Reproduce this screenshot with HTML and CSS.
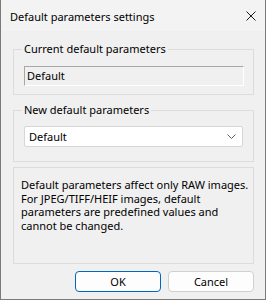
FILE: index.html
```html
<!DOCTYPE html>
<html lang="en">
<head>
  <meta charset="UTF-8">
  <title>Default parameters settings</title>
  <link rel="stylesheet" href="styles.css">
</head>
<body>
<div class="window">
  <div class="titlebar">
    <span class="title">Default parameters settings</span>
    <svg class="close" width="10" height="10" viewBox="0 0 10 10">
      <path d="M0.5 0.5 L9.5 9.5 M9.5 0.5 L0.5 9.5" stroke="#1a1a1a" stroke-width="1" fill="none"/>
    </svg>
  </div>
  <div class="content">
    <fieldset class="group group-current">
      <legend>Current default parameters</legend>
      <div class="readonly">Default</div>
    </fieldset>
    <fieldset class="group group-new">
      <legend>New default parameters</legend>
      <div class="combo">
        <span>Default</span>
        <svg class="chevron" width="9" height="5" viewBox="0 0 9 5">
          <path d="M0.5 0.5 L4.5 4.5 L8.5 0.5" stroke="#5c5c5c" stroke-width="1" fill="none"/>
        </svg>
      </div>
    </fieldset>
    <div class="info">
      Default parameters affect only RAW images.<br>
      For JPEG/TIFF/HEIF images, default<br>
      parameters are predefined values and<br>
      cannot be changed.
    </div>
    <div class="buttons">
      <button class="btn btn-default">OK</button>
      <button class="btn">Cancel</button>
    </div>
  </div>
</div>
</body>
</html>
```

FILE: styles.css
```css
* { box-sizing: border-box; }
body {
  margin: 0;
  font-family: "Noto Sans", sans-serif;
  font-size: 11px;
  color: #000;
  background: #f0f0f0;
}
.window {
  width: 266px;
  height: 300px;
  border: 1px solid #7a7a7a;
  border-top: none;
  background: #f0f0f0;
  display: flex;
  flex-direction: column;
}
.titlebar {
  height: 31px;
  background: #f3f3f3;
  display: flex;
  align-items: center;
  justify-content: space-between;
  padding: 1px 9px 0 9px;
}
.title {
  font-size: 11px;
}
.content {
  flex: 1;
  display: flex;
  flex-direction: column;
  padding: 10px 11px 7px 12px;
}
.group {
  margin: 0;
  border: 1px solid #dcdcdc;
  padding: 9px 9px 8px 10px;
}
.group legend {
  padding: 0 2px;
  margin-left: -2px;
  line-height: 16px;
  white-space: nowrap;
}
.group-new {
  margin-top: 7px;
  padding-bottom: 14px;
}
.readonly {
  height: 20px;
  line-height: 18px;
  padding-left: 2px;
  border: 1px solid;
  border-color: #a8a8a8 #ffffff #ffffff #a8a8a8;
  background: #f0f0f0;
}
.combo {
  height: 21px;
  margin-top: -1px;
  margin-right: 1px;
  background: #fff;
  border: 1px solid #d6d6d6;
  border-radius: 2px;
  display: flex;
  align-items: center;
  justify-content: space-between;
  padding: 0 6px 0 4px;
}
.info {
  margin-top: 5px;
  height: 97px;
  border: 1px solid #dcdcdc;
  padding: 10px 6px 0 7px;
  line-height: 13.5px;
  white-space: nowrap;
}
.buttons {
  margin-top: auto;
  display: flex;
  justify-content: flex-end;
  gap: 7px;
}
.btn {
  width: 86px;
  height: 21px;
  font-family: inherit;
  font-size: 11px;
  color: #000;
  background: #fdfdfd;
  border: 1px solid #d0d0d0;
  border-radius: 4px;
  padding: 0;
}
.btn-default {
  border-color: #0067c0;
}
```
